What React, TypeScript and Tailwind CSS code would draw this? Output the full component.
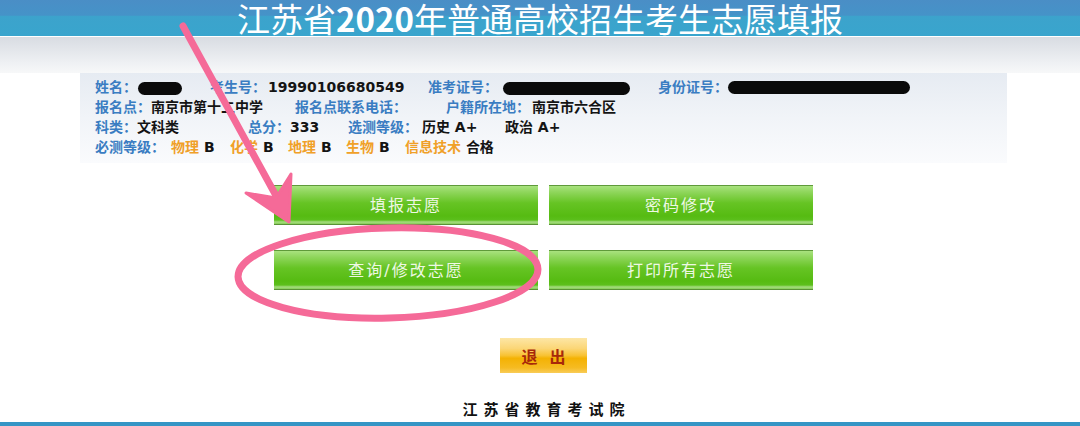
import React from "react";

const FONT = '"DejaVu Sans", "Noto Sans CJK SC", sans-serif';

function Blob({ w }: { w: number }) {
  return (
    <span
      className="inline-block h-[13px] rounded-full bg-[#0a0a0a] align-middle"
      style={{ width: w }}
    />
  );
}

function L({ children }: { children: React.ReactNode }) {
  return <span className="text-[#3a7dc2]">{children}</span>;
}
function O({ children }: { children: React.ReactNode }) {
  return <span className="text-[#f0a028]">{children}</span>;
}
function V({ children }: { children: React.ReactNode }) {
  return <span className="text-[#141414]">{children}</span>;
}

function GreenButton({ label }: { label: string }) {
  return (
    <div className="w-[264px] h-[40px] flex items-center justify-center border-t border-[#5f9a3a] border-b border-b-[#5a9236] bg-[linear-gradient(to_bottom,#a9e27f_0px,#8fd65c_6px,#66c424_17px,#56bb12_30px,#5cbf1c_34px,#a6dc80_36px,#74c640_39px)] text-[#eef8e4] text-[16px] tracking-[2px]">
      <span className="mt-[1px]">{label}</span>
    </div>
  );
}

export default function App() {
  return (
    <div
      className="relative w-[1080px] h-[426px] overflow-hidden bg-white"
      style={{ fontFamily: FONT }}
    >
      {/* header */}
      <div className="h-[37px] flex items-center justify-center bg-[linear-gradient(to_bottom,#4a8ec6_0%,#4593c8_42%,#3ca3cc_46%,#39a5cd_100%)] border-b border-white">
        <div className="text-white text-[33px] leading-[33px] font-normal whitespace-nowrap pt-[1px]" style={{ fontFamily: '"Noto Sans CJK SC", sans-serif' }}>
          江苏省<span className="font-bold">2020</span>年普通高校招生考生志愿填报
        </div>
      </div>
      <div className="h-[36px] bg-[linear-gradient(to_bottom,#d8dce2,#eef0f3_70%,#f7f8f9)]" />

      <div className="pl-[7px] flex flex-col items-center">
        {/* info box */}
        <div className="w-[927px] h-[90px] pt-[4px] pl-[15px] bg-[linear-gradient(to_bottom,#e6ebf2,#f1f4f8_50%,#fafbfd)] text-[14px] leading-[20px] font-bold">
          <div className="flex whitespace-nowrap">
            <div className="w-[115px] flex items-center"><L>姓名：</L><span className="ml-[1px]"><Blob w={44} /></span></div>
            <div className="w-[218px]"><L>考生号：</L><span className="ml-[2px]"><V>19990106680549</V></span></div>
            <div className="w-[230px] flex items-center"><L>准考证号：</L><span className="ml-[5px]"><Blob w={127} /></span></div>
            <div className="flex items-center"><L>身份证号：</L><Blob w={182} /></div>
          </div>
          <div className="flex whitespace-nowrap">
            <div className="w-[200px]"><L>报名点：</L><V>南京市第十二中学</V></div>
            <div className="w-[151px]"><L>报名点联系电话：</L></div>
            <div><L>户籍所在地：</L><span className="ml-[2px]"><V>南京市六合区</V></span></div>
          </div>
          <div className="flex whitespace-nowrap">
            <div className="w-[153px]"><L>科类：</L><V>文科类</V></div>
            <div className="w-[100px]"><L>总分：</L><V>333</V></div>
            <div className="w-[74px]"><L>选测等级：</L></div>
            <div className="w-[83px]"><V>历史 A+</V></div>
            <div><V>政治 A+</V></div>
          </div>
          <div className="flex whitespace-nowrap">
            <div className="w-[76px]"><L>必测等级：</L></div>
            <div className="w-[59px]"><O>物理</O> <V>B</V></div>
            <div className="w-[58px]"><O>化学</O> <V>B</V></div>
            <div className="w-[58px]"><O>地理</O> <V>B</V></div>
            <div className="w-[59px]"><O>生物</O> <V>B</V></div>
            <div><O>信息技术</O> <V>合格</V></div>
          </div>
        </div>

        {/* buttons */}
        <div className="mt-[22px] grid grid-cols-2 gap-x-[11px] gap-y-[25px]">
          <GreenButton label="填报志愿" />
          <GreenButton label="密码修改" />
          <GreenButton label="查询/修改志愿" />
          <GreenButton label="打印所有志愿" />
        </div>

        {/* exit */}
        <div className="mt-[48px] w-[87px] h-[35px] flex items-center justify-center gap-[12px] bg-[linear-gradient(to_bottom,#fde6a6_0%,#fbd676_30%,#f8c233_50%,#f4b203_58%,#f6bb22_85%,#f9cc58_100%)] text-[#a8280a] text-[16px] font-bold" style={{ fontFamily: '"Noto Sans CJK SC", serif' }}>
          <span>退</span>
          <span>出</span>
        </div>

        {/* footer */}
        <div className="mt-[27px] h-[20px] text-[15px] leading-[20px] font-bold text-[#111] tracking-[6px] pl-[6px]">
          江苏省教育考试院
        </div>
      </div>
      <div className="absolute left-0 right-0 bottom-0 h-[4px] bg-[#3595c5]" />

      {/* pink annotation overlay */}
      <svg className="absolute inset-0 pointer-events-none" width="1080" height="426" viewBox="0 0 1080 426">
        <line x1="183" y1="26" x2="280" y2="203" stroke="#f56a98" strokeWidth="7" strokeLinecap="round" />
        <polygon points="289,222 246,193 276,198 291,174" fill="#f56a98" stroke="#f56a98" strokeWidth="3" strokeLinejoin="round" />
        <ellipse cx="388" cy="273" rx="150" ry="45" fill="none" stroke="#f56a98" strokeWidth="7" transform="rotate(-1.5 388 273)" />
      </svg>
    </div>
  );
}
